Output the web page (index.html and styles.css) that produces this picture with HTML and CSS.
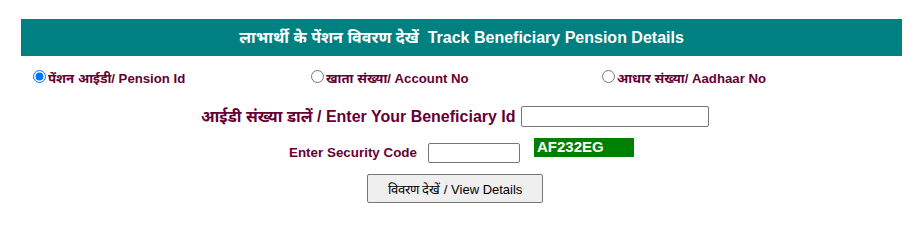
FILE: index.html
```html
<!DOCTYPE html>
<html lang="hi">
<head>
<meta charset="utf-8">
<title>Track Beneficiary Pension Details</title>
<link rel="stylesheet" href="styles.css">
</head>
<body>
<div class="panel">
  <div class="header">लाभार्थी के पेंशन विवरण देखें&nbsp;&nbsp;Track Beneficiary Pension Details</div>
  <div class="options">
    <label class="opt"><input type="radio" name="t" checked><span>पेंशन आईडी/ Pension Id</span></label>
    <label class="opt"><input type="radio" name="t"><span>खाता संख्या/ Account No</span></label>
    <label class="opt"><input type="radio" name="t"><span>आधार संख्या/ Aadhaar No</span></label>
  </div>
  <div class="row row-id">
    <span class="big-label">आईडी संख्या डालें / Enter Your Beneficiary Id</span>
    <input type="text" class="txt txt-id">
  </div>
  <div class="row row-code">
    <span class="small-label">Enter Security Code</span>
    <input type="text" class="txt txt-code">
    <span class="captcha">AF232EG</span>
  </div>
  <div class="row row-btn">
    <button type="button" class="btn">विवरण देखें / View Details</button>
  </div>
</div>
</body>
</html>
```
FILE: styles.css
```css
html, body {
  margin: 0;
  padding: 0;
  background: #ffffff;
  font-family: "Liberation Sans", Arial, "Noto Sans", sans-serif;
}
.panel {
  margin: 19px 19px 0 21px;
  width: 881px;
}
.header {
  background: #008080;
  color: #ffffff;
  font-weight: bold;
  font-size: 16px;
  height: 37px;
  line-height: 37px;
  text-align: center;
}
.options {
  display: grid;
  grid-template-columns: 278px 291px auto;
  padding-left: 12px;
  margin-top: 13px;
  height: 16px;
}
.opt {
  display: flex;
  align-items: center;
  color: #660033;
  font-weight: bold;
  font-size: 13.2px;
}
.opt input {
  margin: 0 2px 0 0;
  width: 13px;
  height: 13px;
  position: relative;
  top: -2px;
}
.row {
  display: flex;
  align-items: center;
}
.row-id {
  margin-top: 20px;
  padding-left: 180px;
}
.big-label {
  color: #660033;
  font-weight: bold;
  font-size: 16px;
  margin-right: 5px;
}
.txt {
  box-sizing: border-box;
  border: 1px solid #767676;
  border-radius: 2px;
  background: #fff;
  padding: 1px 2px;
  font-size: 13px;
}
.txt-id {
  width: 188px;
  height: 21px;
}
.row-code {
  margin-top: 11px;
  padding-left: 268px;
  align-items: flex-start;
  height: 25px;
}
.small-label {
  color: #660033;
  font-weight: bold;
  font-size: 13.4px;
  margin-top: 7px;
  margin-right: 11px;
}
.txt-code {
  width: 92px;
  height: 20px;
  margin-top: 5px;
}
.captcha {
  background: #008000;
  color: #ffffff;
  font-weight: bold;
  font-size: 15px;
  width: 100px;
  height: 19px;
  line-height: 17px;
  box-sizing: border-box;
  padding-left: 3px;
  margin-left: 14px;
}
.row-btn {
  margin-top: 11px;
  padding-left: 346px;
}
.btn {
  width: 176px;
  height: 29px;
  background: #efefef;
  border: 1px solid #767676;
  border-radius: 2px;
  font-family: "Liberation Sans", Arial, sans-serif;
  font-size: 13px;
  color: #000;
  padding: 0;
}
```
